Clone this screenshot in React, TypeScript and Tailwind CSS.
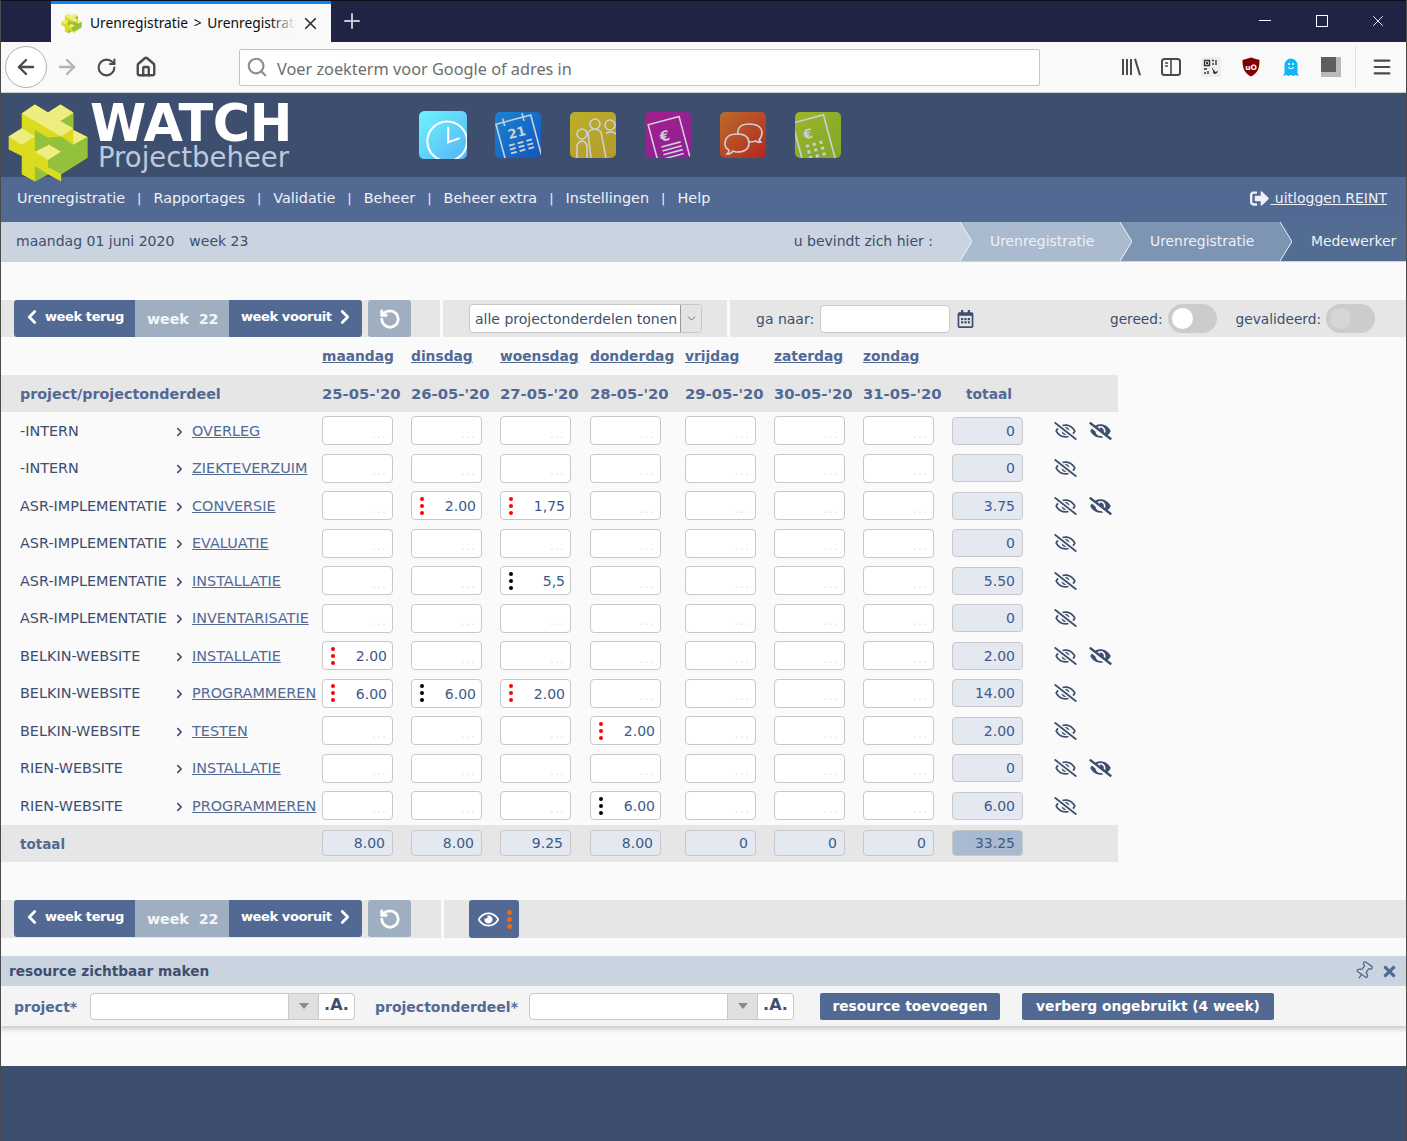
import { ChevronLeft, ChevronRight, ChevronDown, RotateCcw, ArrowLeft, ArrowRight, RotateCw, Search, Plus, X, Menu, Pin, Home } from "lucide-react";
import { FaRegEyeSlash, FaEyeSlash, FaRegEye, FaRegCalendarAlt, FaSignOutAlt, FaChevronRight, FaTimes } from "react-icons/fa";

type Mark = "red" | "black";
type Cell = { value: string; mark: Mark } | null;

interface RowData {
  project: string;
  part: string;
  cells: Record<number, { value: string; mark: Mark }>;
  total: string;
  hidden?: boolean;
}

const rows: RowData[] = [
  { project: "-INTERN", part: "OVERLEG", cells: {}, total: "0", hidden: true },
  { project: "-INTERN", part: "ZIEKTEVERZUIM", cells: {}, total: "0" },
  { project: "ASR-IMPLEMENTATIE", part: "CONVERSIE", cells: { 1: { value: "2.00", mark: "red" }, 2: { value: "1,75", mark: "red" } }, total: "3.75", hidden: true },
  { project: "ASR-IMPLEMENTATIE", part: "EVALUATIE", cells: {}, total: "0" },
  { project: "ASR-IMPLEMENTATIE", part: "INSTALLATIE", cells: { 2: { value: "5,5", mark: "black" } }, total: "5.50" },
  { project: "ASR-IMPLEMENTATIE", part: "INVENTARISATIE", cells: {}, total: "0" },
  { project: "BELKIN-WEBSITE", part: "INSTALLATIE", cells: { 0: { value: "2.00", mark: "red" } }, total: "2.00", hidden: true },
  { project: "BELKIN-WEBSITE", part: "PROGRAMMEREN", cells: { 0: { value: "6.00", mark: "red" }, 1: { value: "6.00", mark: "black" }, 2: { value: "2.00", mark: "red" } }, total: "14.00" },
  { project: "BELKIN-WEBSITE", part: "TESTEN", cells: { 3: { value: "2.00", mark: "red" } }, total: "2.00" },
  { project: "RIEN-WEBSITE", part: "INSTALLATIE", cells: {}, total: "0", hidden: true },
  { project: "RIEN-WEBSITE", part: "PROGRAMMEREN", cells: { 3: { value: "6.00", mark: "black" } }, total: "6.00" },
];

const days = ["maandag", "dinsdag", "woensdag", "donderdag", "vrijdag", "zaterdag", "zondag"];
const dates = ["25-05-'20", "26-05-'20", "27-05-'20", "28-05-'20", "29-05-'20", "30-05-'20", "31-05-'20"];
const dayTotals = ["8.00", "8.00", "9.25", "8.00", "0", "0", "0"];
const menu = ["Urenregistratie", "Rapportages", "Validatie", "Beheer", "Beheer extra", "Instellingen", "Help"];

const gridCols = "grid grid-cols-[156px_146px_89px_89px_90px_95px_89px_89px_89px_166px] pl-5";

function Logo({ className }: { className: string }) {
  return (
    <svg viewBox="20 24 250 242" className={className}>
      <polygon fill="#dcdc1e" points="65,55 105,28 145,52 183,28 222,52 222,105 265,127 265,190 185,240 185,262 145,240 105,262 65,240 65,185 25,165 25,125 65,100" />
      <polygon fill="#eeee80" points="65,55 105,28 145,52 183,28 222,52 183,78 222,100 185,125 105,78" />
      <polygon fill="#eeee80" points="25,125 65,100 105,125 65,150" />
      <polygon fill="#eeee80" points="222,105 265,127 222,150" />
      <polygon fill="#eeee80" points="105,172 145,148 185,172 145,197" />
      <polygon fill="#93c13c" points="105,105 145,128 145,152 105,172" />
      <polygon fill="#93c13c" points="183,78 222,55 222,100" />
      <polygon fill="#93c13c" points="145,128 185,125 222,150 265,127 265,190 185,240 145,218 145,197 185,172 145,148" />
      <polygon fill="#93c13c" points="105,215 145,240 105,262" />
    </svg>
  );
}

function AppIcon({ id, from, to, big, children }: { id: string; from: string; to: string; big?: boolean; children: React.ReactNode }) {
  return (
    <svg viewBox="0 0 46 46" className={big ? "w-12 h-12" : "w-[46px] h-[46px]"}>
      <defs>
        <linearGradient id={id} x1="0" y1="0" x2="1" y2="1">
          <stop offset="0" stopColor={from} />
          <stop offset="1" stopColor={to} />
        </linearGradient>
        <clipPath id={id + "c"}>
          <rect width="46" height="46" rx="5" />
        </clipPath>
      </defs>
      <g clipPath={`url(#${id}c)`}>
        <rect width="46" height="46" fill={`url(#${id})`} />
        <g fill="none" stroke="#ccd0d6" strokeWidth="1.6">{children}</g>
      </g>
    </svg>
  );
}

function AppIcons() {
  return (
    <div className="flex items-center gap-[28px] ml-[129px]">
      <AppIcon id="ic1" from="#6ff4ff" to="#55b4f4" big>
        <circle cx="27" cy="29" r="19" strokeWidth="2" stroke="#fff" />
        <path d="M28 15v15l11-4" strokeWidth="2" stroke="#fff" />
      </AppIcon>
      <div className="flex gap-[29px]">
        <AppIcon id="ic2" from="#1a84cf" to="#1157c0">
          <g transform="rotate(-15 23 25)">
            <rect x="5" y="7" width="36" height="48" />
            <path d="M13 3v8M33 3v8" />
            <text x="23" y="25" fontFamily="DejaVu Sans" fontSize="13" fontWeight="700" fill="#ccd0d6" stroke="none" textAnchor="middle">21</text>
            <path d="M12 31h6M21 31h6M30 31h6M12 35h6M21 35h6M30 35h6M12 39h6M21 39h6M30 39h6" strokeWidth="1.8" />
          </g>
        </AppIcon>
        <AppIcon id="ic3" from="#bcb02c" to="#b39a2a">
          <circle cx="12" cy="22" r="5" />
          <circle cx="25" cy="12" r="5" />
          <circle cx="40" cy="13" r="5" />
          <path d="M7 46V33q5-8 10 0v13M21 46l-3-26q7-6 13 0l5 26M36 21q8-3 12 3" />
        </AppIcon>
        <AppIcon id="ic4" from="#a31f8e" to="#8e1f96">
          <g transform="rotate(-15 23 25)">
            <rect x="7" y="8" width="32" height="46" />
            <text x="20" y="28" fontFamily="DejaVu Sans" fontSize="14" fontWeight="700" fill="#ccd0d6" stroke="none" textAnchor="middle">€</text>
            <path d="M14 33h20M14 37h20M14 41h20M14 45h20" />
          </g>
        </AppIcon>
        <AppIcon id="ic5" from="#bd6c2c" to="#b3261f">
          <path d="M18 22q-1-10 11-10t13 8q0 5-3 8l2 2q-3 1-5-1-3 1-7 1" />
          <path d="M5 32q0-10 12-10t12 9-12 9q-2 0-4-1-2 3-6 3 2-2 2-4-4-2-4-6z" />
        </AppIcon>
        <AppIcon id="ic6" from="#9db52c" to="#7fa828">
          <g transform="rotate(-15 23 25)">
            <rect x="2" y="5" width="32" height="50" />
            <text x="14" y="24" fontFamily="DejaVu Sans" fontSize="13" fontWeight="700" fill="#ccd0d6" stroke="none" textAnchor="middle">€</text>
            <path d="M9 31h3M16 31h3M23 31h3M9 37h3M16 37h3M23 37h3M9 43h3M16 43h3M23 43h3" strokeWidth="3" />
          </g>
        </AppIcon>
      </div>
    </div>
  );
}

function TitleBar() {
  return (
    <div className="h-[42px] bg-[#1f2445] flex pl-[51px] border-t border-[#0d0f1f]">
      <div className="w-[280px] h-[41px] bg-[#f9f9fa] border-t-[3px] border-[#0a84ff] flex items-center pl-[10px] font-['Noto_Sans',sans-serif] text-[13.8px] [word-spacing:2px] text-[#0c0c0d]">
        <Logo className="w-[21px] h-[21px] shrink-0" />
        <div className="relative w-[206px] ml-[8px] overflow-hidden whitespace-nowrap">
          Urenregistratie &gt; Urenregistratie
          <div className="absolute right-0 top-0 bottom-0 w-[26px] bg-gradient-to-r from-transparent to-[#f9f9fa]" />
        </div>
        <X className="w-[19px] h-[19px] ml-[5px] text-[#333]" strokeWidth={2.2} />
      </div>
      <Plus className="w-[24px] h-[24px] ml-[9px] mt-[8px] text-[#c5c7d0]" strokeWidth={2} />
      <div className="ml-auto flex items-center mb-[2px]">
        <div className="w-[12px] h-px bg-white" />
        <div className="w-[12px] h-[12px] ml-[45px] border border-white" />
        <X className="w-[18px] h-[18px] ml-[41px] mr-[20px] text-white" strokeWidth={1.2} />
      </div>
    </div>
  );
}

function ToolIcons() {
  return (
    <div className="ml-auto flex items-center">
      <svg viewBox="0 0 20 20" className="w-5 h-5 text-[#4a4a4f]" fill="currentColor">
        <path d="M1 2h2v16H1zM5 2h2v16H5zM9 2h2v16H9zM13 2l2-.5 5 16.5-2 .5z" />
      </svg>
      <svg viewBox="0 0 20 20" className="w-5 h-5 ml-[20px] text-[#4a4a4f]" fill="none" stroke="currentColor" strokeWidth="2">
        <rect x="1" y="2" width="18" height="16" rx="2.5" />
        <path d="M10 2v16M4 6h3M4 9h3" strokeWidth="1.6" />
      </svg>
      <svg viewBox="0 0 20 20" className="w-5 h-5 ml-[20px] text-[#333]">
        <rect width="20" height="20" rx="2" fill="#eee" />
        <path fill="none" stroke="currentColor" strokeWidth="1.4" d="M3.5 3.5h5v5h-5zM11 3.500h2M15 3v5M11 7h2M3 12h3M7 14v3M3 16h2M11 12h1" />
        <path fill="currentColor" d="M5 5h2v2H5zM13 17a4 4 0 0 1 0-5l1 3 3-1a4 4 0 0 1-4 3z" />
      </svg>
      <svg viewBox="0 0 20 20" className="w-5 h-5 ml-[20px]">
        <path fill="#800000" d="M10 0.500l8.500 2.500c0 9-2 13-8.500 16.500C3.500 16 1.500 12 1.500 3z" />
        <text x="10" y="12.500" textAnchor="middle" fontFamily="DejaVu Sans" fontSize="7.500" fontWeight="700" fill="#fff">uO</text>
      </svg>
      <svg viewBox="0 0 20 20" className="w-5 h-5 ml-[20px]">
        <path fill="#12b5f5" d="M2 19l1.500-3V8a6.500 6.500 0 0 1 13 0v8l1.500 3-3.500-1-2 1-2.500-1-2.500 1-2-1z" />
        <circle cx="8" cy="7" r="1" fill="#fff" />
        <circle cx="12" cy="7" r="1" fill="#fff" />
        <path d="M7 10.500q3 2.500 6 0" stroke="#fff" fill="none" strokeWidth="1" />
      </svg>
      <div className="w-5 h-5 ml-[20px] bg-[#b9b9b9]">
        <div className="w-[15px] h-[15px] bg-[#5e5e5e]" />
      </div>
      <div className="w-px h-[42px] bg-[#e0e0e1] ml-[14px]" />
      <Menu className="w-[22px] h-[22px] ml-[15px] mr-[14px] text-[#4a4a4f]" strokeWidth={2.4} />
    </div>
  );
}

function NavBar() {
  return (
    <div className="h-[51px] bg-[#f9f9fa] flex items-center pl-[5px] border-b border-[#cfcfd1]">
      <div className="w-[42px] h-[42px] rounded-full border border-[#b1b1b3] flex items-center justify-center bg-white">
        <ArrowLeft className="w-[24px] h-[24px] text-[#4a4a4f]" strokeWidth={2.4} />
      </div>
      <ArrowRight className="w-[24px] h-[24px] ml-[8px] text-[#b4b4b5]" strokeWidth={2.4} />
      <RotateCw className="w-[21px] h-[21px] ml-[17px] text-[#4a4a4f]" strokeWidth={2.4} />
      <Home className="w-[22px] h-[22px] ml-[18px] text-[#4a4a4f]" strokeWidth={2.6} />
      <div className="w-[801px] h-[37px] ml-[82px] bg-white border border-[#c4c4c4] rounded-[2px] flex items-center pl-[6px] font-['Noto_Sans',sans-serif] text-[16.300px] text-[#6e6e6e]">
        <Search className="w-[22px] h-[22px] text-[#8f8f8f]" strokeWidth={2.4} />
        <span className="ml-[9px] mt-[4px]">Voer zoekterm voor Google of adres in</span>
      </div>
      <ToolIcons />
    </div>
  );
}

function SiteHeader() {
  return (
    <div className="h-[84px] bg-[#3d4e6f] flex items-center relative">
      <Logo className="w-[82px] h-[80px] ml-[7px] mt-[15px] shrink-0" />
      <div className="ml-[1px] w-[200px] flex flex-col mt-[4px] whitespace-nowrap">
        <span className="text-[51px] font-bold text-white leading-[38px] tracking-[-0.5px] pt-[2px]">WATCH</span>
        <span className="text-[27.500px] text-[#bcc9dc] leading-[28px] ml-[8px]">Projectbeheer</span>
      </div>
      <AppIcons />
    </div>
  );
}

function SiteMenu() {
  return (
    <div className="h-[45px] bg-[#526994] flex items-center pl-[17px] pr-5 pb-[1px] text-[14.400px] text-[#eef1f6]">
      {menu.map((m, i) => (
        <div key={m} className="flex items-center">
          {i > 0 && <span className="mx-[12px] text-[13px]">|</span>}
          <span>{m}</span>
        </div>
      ))}
      <a className="ml-auto flex items-center text-[14px] mb-[1px] underline text-[#eef1f6] whitespace-pre">
        <FaSignOutAlt className="w-[19px] h-[19px] mr-[1px]" />
        {" uitloggen REINT"}
      </a>
    </div>
  );
}

function Crumb({ label, bg, prev, width }: { label: string; bg: string; prev: string; width: string }) {
  return (
    <div className={`relative h-full flex items-center pb-px text-[13.900px] text-[#eef1f6] ${bg} ${width}`}>
      <svg viewBox="0 0 12 40" preserveAspectRatio="none" className="absolute left-0 top-0 w-[12px] h-full">
        <polygon points="0,0 12,20 0,40" fill={prev} />
        <polyline points="0,0 12,20 0,40" fill="none" stroke="#f0f3f7" strokeWidth="1" />
      </svg>
      {label}
    </div>
  );
}

function Breadcrumb() {
  return (
    <div className="h-10 bg-[#cad4e0] flex items-center pl-4 pb-px text-[14px] text-[#3d4e6f]">
      <span>maandag 01 juni 2020</span>
      <span className="ml-[15px]">week 23</span>
      <span className="ml-auto mr-[27px]">u bevindt zich hier :</span>
      <Crumb label="Urenregistratie" bg="bg-[#abbbcf]" prev="#cad4e0" width="w-[160px] pl-[30px]" />
      <Crumb label="Urenregistratie" bg="bg-[#7d94b3]" prev="#abbbcf" width="w-[160px] pl-[30px]" />
      <Crumb label="Medewerker" bg="bg-[#526c92]" prev="#7d94b3" width="w-[127px] pl-[31px]" />
    </div>
  );
}

function WeekButtons() {
  return (
    <div className="flex h-[37px] text-white font-bold text-[13px] tracking-[-0.4px] whitespace-nowrap ml-[14px]">
      <div className="w-[121px] bg-[#526994] rounded-l-[3px] flex items-center pl-[7px] pb-[3px]">
        <ChevronLeft className="w-[22px] h-[22px]" strokeWidth={3} />
        <span className="ml-[2px]">week terug</span>
      </div>
      <div className="w-[94px] bg-[#9fafc1] flex items-center pl-[12px] pt-[2px] text-[14.200px] tracking-normal whitespace-pre text-[#f4f6f9]">week  22</div>
      <div className="w-[133px] bg-[#526994] rounded-r-[3px] flex items-center pl-[12px] pb-[3px]">
        <span>week vooruit</span>
        <ChevronRight className="w-[22px] h-[22px] ml-[2px]" strokeWidth={3} />
      </div>
      <div className="w-[43px] ml-[6px] bg-[#9fafc1] rounded-[3px] flex items-center justify-center">
        <RotateCcw className="w-[22px] h-[22px]" strokeWidth={3} />
      </div>
    </div>
  );
}

function Toggle({ knob }: { knob: string }) {
  return (
    <div className="w-[49px] h-[29px] rounded-full bg-[#cccccc] flex items-center pl-1 ml-[5px]">
      <div className={`w-[21px] h-[21px] rounded-full ${knob}`} />
    </div>
  );
}

function TopToolbar() {
  return (
    <div className="mt-[38px] h-[37px] flex gap-[3px] text-[14px] text-[#3d4e6f]">
      <div className="w-[440px] bg-[#e6e6e6]">
        <WeekButtons />
      </div>
      <div className="w-[284px] bg-[#e6e6e6] flex items-center pl-[26px]">
        <div className="w-[233px] h-[29px] bg-white border border-[#c8c8c8] rounded-[4px] flex items-center pl-[5px] justify-between overflow-hidden">
          <span className="mt-px">alle projectonderdelen tonen</span>
          <div className="w-[21px] h-full bg-[#e4e4e4] border-l border-[#999] flex items-center justify-center">
            <ChevronDown className="w-[13px] h-[13px] text-[#555]" strokeWidth={1.5} />
          </div>
        </div>
      </div>
      <div className="flex-1 bg-[#e6e6e6] flex items-center pl-[26px]">
        <span className="mt-px">ga naar:</span>
        <div className="w-[130px] h-[28px] ml-[6px] bg-white border border-[#c8c8c8] rounded-[4px]" />
        <FaRegCalendarAlt className="w-[17px] h-[18px] ml-[7px] text-[#3d4e6f]" />
        <span className="ml-auto mt-px text-[13.700px]">gereed:</span>
        <Toggle knob="bg-white" />
        <span className="ml-[19px] mt-px text-[13.700px]">gevalideerd:</span>
        <Toggle knob="bg-[#d6d6d6]" />
        <div className="w-8" />
      </div>
    </div>
  );
}

function HourCell({ cell }: { cell: Cell }) {
  return (
    <div className="w-[71px] h-[29px] bg-white border border-[#c8c8c8] rounded-[4px] flex items-center pl-[8px] pr-[5px] text-[14px] text-[#3d5a8a] relative">
      {cell ? (
        <>
          <div className="flex flex-col gap-[3px]">
            {[0, 1, 2].map((d) => (
              <div key={d} className={`w-[4px] h-[4px] rounded-full ${cell.mark === "red" ? "bg-[#ff0000]" : "bg-black"}`} />
            ))}
          </div>
          <span className="ml-auto mt-[2px]">{cell.value}</span>
        </>
      ) : (
        <span className="ml-auto text-[13px] leading-[12px] mt-[6px] tracking-[1px] text-[#dbe9f7]">...</span>
      )}
    </div>
  );
}

function TotalCell({ value, dark, low }: { value: string; dark?: boolean; low?: boolean }) {
  return (
    <div className={`w-[71px] border border-[#c8c8c8] rounded-[4px] flex items-center justify-end pr-[7px] text-[14px] text-[#3d5a8a] ${low ? "h-[26px]" : "h-[28px]"} ${dark ? "bg-[#a9b9d0]" : "bg-[#e4e8f0]"}`}>
      <span className="mt-[1px]">{value}</span>
    </div>
  );
}

function HourRow({ row }: { row: RowData }) {
  return (
    <div className={`${gridCols} h-[37.5px] items-center text-[14.400px] text-[#3d4e6f]`}>
      <span className="whitespace-nowrap mt-[2px]">{row.project}</span>
      <span className="flex items-center whitespace-nowrap mt-[2px]">
        <FaChevronRight className="w-[7px] h-[10px] shrink-0 text-[#3d4e6f]" />
        <a className="ml-[9px] underline text-[#526994]">{row.part}</a>
      </span>
      {days.map((d, i) => (
        <HourCell key={d} cell={row.cells[i] ?? null} />
      ))}
      <div className="flex items-center">
        <TotalCell value={row.total} />
        <FaRegEyeSlash className="w-[23px] h-[18px] ml-[31px] text-[#3d4e6f]" />
        {row.hidden && <FaEyeSlash className="w-[23px] h-[18px] ml-[12px] text-[#3d4e6f]" />}
      </div>
    </div>
  );
}

function HourTable() {
  return (
    <div className="w-[1118px]">
      <div className={`${gridCols} h-[38px] items-center text-[13.800px] font-bold text-[#526994]`}>
        <span />
        <span />
        {days.map((d) => (
          <a key={d} className="underline">{d}</a>
        ))}
      </div>
      <div className={`${gridCols} h-[37px] pt-[2px] items-center bg-[#e6e6e6] text-[14.300px] font-bold text-[#526994]`}>
        <span className="whitespace-nowrap">project/projectonderdeel</span>
        <span />
        {dates.map((d) => (
          <span key={d} className="whitespace-nowrap text-[14.800px]">{d}</span>
        ))}
        <span className="ml-[14px] text-[13.800px]">totaal</span>
      </div>
      {rows.map((r) => (
        <HourRow key={r.project + r.part} row={r} />
      ))}
      <div className={`${gridCols} h-[37.5px] items-center bg-[#e6e6e6] text-[13.500px] font-bold text-[#526994]`}>
        <span className="mt-[1px]">totaal</span>
        <span />
        {dayTotals.map((v, i) => (
          <div key={i} className="font-normal">
            <TotalCell value={v} low />
          </div>
        ))}
        <div className="font-normal">
          <TotalCell value="33.25" dark low />
        </div>
      </div>
    </div>
  );
}

function BottomToolbar() {
  return (
    <div className="mt-[38px] h-[38px] flex gap-[3px]">
      <div className="w-[441px] bg-[#e6e6e6]">
        <WeekButtons />
      </div>
      <div className="flex-1 bg-[#e6e6e6] pl-[25px]">
        <div className="w-[50px] h-[38px] bg-[#526994] rounded-[3px] flex items-center pl-[9px] text-white">
          <FaRegEye className="w-[21px] h-[21px]" />
          <div className="flex flex-col gap-[2px] ml-[8px]">
            {[0, 1, 2].map((d) => (
              <div key={d} className="w-[5px] h-[5px] rounded-full bg-[#f26a10]" />
            ))}
          </div>
        </div>
      </div>
    </div>
  );
}

function ComboField({ width }: { width: string }) {
  return (
    <div className={`h-[27px] bg-white border border-[#c8c8c8] rounded-[4px] flex overflow-hidden ${width}`}>
      <div className="flex-1" />
      <div className="w-[30px] bg-[#e0e0e0] border-l border-[#c8c8c8] flex items-center justify-center">
        <div className="w-0 h-0 border-l-[5px] border-r-[5px] border-t-[6px] border-l-transparent border-r-transparent border-t-[#8a8a8a]" />
      </div>
      <div className="w-[36px] border-l border-[#c8c8c8] flex items-center justify-center text-[16px] font-bold text-[#3d4e6f] pb-[2px]">.A.</div>
    </div>
  );
}

function ResourcePanel() {
  return (
    <div className="mt-[18px] shadow-[0_3px_5px_rgba(0,0,0,0.2)]">
      <div className="h-[30px] bg-[#cad4e0] flex items-center pl-[9px] pr-[10px] text-[13.700px] font-bold text-[#3d4e6f]">
        <span className="mt-[1px]">resource zichtbaar maken</span>
        <Pin className="ml-auto w-[20px] h-[20px] rotate-[35deg] text-[#526994]" strokeWidth={1.6} />
        <FaTimes className="w-[15px] h-[17px] ml-[8px] text-[#526994]" />
      </div>
      <div className="h-[40px] bg-[#f4f4f4] flex items-center pl-[14px] text-[14px] font-bold text-[#526994]">
        <span className="w-[76px] mt-[3px]">project*</span>
        <ComboField width="w-[265px]" />
        <span className="ml-[20px] w-[154px] mt-[3px]">projectonderdeel*</span>
        <ComboField width="w-[265px]" />
        <div className="ml-[26px] w-[180px] h-[27px] bg-[#526994] rounded-[2px] flex items-center justify-center text-white text-[13.800px]">resource toevoegen</div>
        <div className="ml-[22px] w-[252px] h-[27px] bg-[#526994] rounded-[2px] flex items-center justify-center text-white text-[13.800px]">verberg ongebruikt (4 week)</div>
      </div>
    </div>
  );
}

export default function App() {
  return (
    <div className="relative h-[1141px] flex flex-col overflow-hidden bg-[#fafafa] font-['DejaVu_Sans',sans-serif]">
      <TitleBar />
      <NavBar />
      <SiteHeader />
      <SiteMenu />
      <Breadcrumb />
      <TopToolbar />
      <HourTable />
      <BottomToolbar />
      <ResourcePanel />
      <div className="mt-[40px] flex-1 bg-[#3d4e6f]" />
      <div className="absolute left-0 inset-y-0 w-px bg-[#4a4a4a]" />
      <div className="absolute right-0 inset-y-0 w-px bg-[#4a4a4a]" />
    </div>
  );
}
